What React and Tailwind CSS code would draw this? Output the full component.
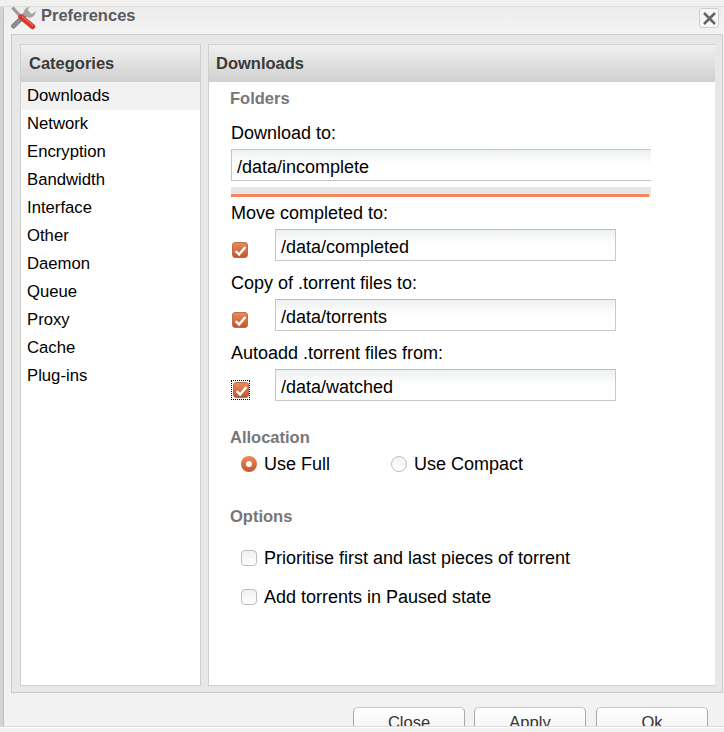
import React from 'react'

const sans = "font-['Liberation_Sans',Arial,sans-serif]"

const categories = ['Downloads', 'Network', 'Encryption', 'Bandwidth', 'Interface', 'Other', 'Daemon', 'Queue', 'Proxy', 'Cache', 'Plug-ins']

const headerBar = 'h-[38px] flex items-center bg-gradient-to-b from-[#f0f0f0] to-[#d0d0d0] border-t border-[#d2d2d2] font-bold text-[#3a3a3a] shrink-0'

// preferences tool icon: spanner crossed with a red handled screwdriver
const ToolsIcon = () => (
  <svg width="26" height="26" viewBox="0 0 26 26" className="shrink-0">
    <path d="M3.5 21 L17 8" stroke="#8c8c8c" strokeWidth="5" strokeLinecap="round" fill="none" />
    <path d="M20 2 A6 6 0 0 0 14 10 L18 12.5 A6 6 0 0 0 25.5 6 L22 9 L18.5 7 L18 4 Z" fill="#a6a6a6" />
    <path d="M2.5 2.5 L10.5 11.5" stroke="#9a9a9a" strokeWidth="3.2" fill="none" />
    <path d="M11 12 L22.5 21.5" stroke="#d8382e" strokeWidth="5.5" strokeLinecap="round" fill="none" />
    <path d="M11.5 11 L23 20.5" stroke="#f08070" strokeWidth="1" fill="none" />
  </svg>
)

const CheckedBox = () => (
  <span className="flex items-center justify-center w-4 h-4 rounded-[3px] border border-[#b8704f] bg-gradient-to-b from-[#ec8a5a] to-[#c4552c]">
    <svg width="13" height="13" viewBox="0 0 12 12">
      <path d="M1.5 6.5 L4.7 9.6 L10.5 2.8" fill="none" stroke="#fff" strokeWidth="2.2" />
    </svg>
  </span>
)

const EmptyBox = () => (
  <span className="block w-4 h-4 rounded-[4px] border border-[#bdbdbd] bg-gradient-to-b from-[#f0f0f0] to-[#ffffff]" />
)

const PathRow = ({ value, focused }) => (
  <div className="flex items-start h-8 mt-[6px]">
    <div className="w-[45px] pl-[2px] pt-[13px] h-8 shrink-0">
      {focused ? (
        <span className="block w-[19px] h-[20px] -ml-px -mt-[2px] p-px border border-dotted border-black">
          <CheckedBox />
        </span>
      ) : (
        <CheckedBox />
      )}
    </div>
    <div className="w-[341px] h-8 px-[5px] pt-[4px] flex items-center border border-[#c8c8c8] border-t-[#bcbcbc] bg-gradient-to-b from-[#eef1f1] via-white to-white text-black">
      {value}
    </div>
  </div>
)

const SectionLabel = ({ className, children }) => (
  <div className={`h-5 leading-5 font-bold text-[#777] ${className}`}>{children}</div>
)

const FieldLabel = ({ className, children }) => (
  <div className={`h-5 leading-5 pl-px text-[18px] text-black ${className}`}>{children}</div>
)

const FooterButton = ({ className, children }) => (
  <button className={`w-[112px] h-[32px] pb-[2px] rounded-t-[5px] border border-[#a8a8a8] border-t-[#c8c8c8] bg-gradient-to-b from-[#ffffff] to-[#f2f2f2] text-[#333] text-center leading-[26px] ${className}`}>
    {children}
  </button>
)

export default function App() {
  return (
    <div className={`${sans} w-[724px] h-[732px] overflow-hidden flex flex-col bg-[#f2f0ee] text-[16.5px]`}>
      <div className="h-[6px] border-b border-[#dedcda] box-content shrink-0" />

      <div className="flex h-[719px] shrink-0">
        <div className="w-[4px] bg-[#d4d4d4] border-r border-[#bfbfbf] shrink-0" />

        <div className="flex-1 flex flex-col bg-[#f2f2f2] min-w-0">
          {/* Title bar */}
          <div className="h-[27px] flex items-start pl-[6px] pr-[4px] bg-gradient-to-b from-[#ececec] to-[#f4f4f4] shrink-0 overflow-hidden">
            <div className="-mt-[2px]"><ToolsIcon /></div>
            <div className="ml-[5px] font-bold text-[#5a5a60] leading-[16px]">Preferences</div>
            <div className="ml-auto mt-px w-[20px] h-[20px] flex items-center justify-center rounded-[3px] border border-[#cfcfcf] bg-[#f7f7f7]">
              <svg width="15" height="15" viewBox="0 0 15 15">
                <path d="M2 2 L13 13 M13 2 L2 13" stroke="#666" strokeWidth="2.6" />
              </svg>
            </div>
          </div>

          {/* Main panel */}
          <div className="ml-[7px] h-[659px] pl-[8px] pt-[9px] pr-[7px] pb-[6px] flex gap-[7px] bg-[#e7e7e7] border border-[#cccccc] shrink-0">
            <div className="w-[181px] flex flex-col bg-white border-x border-b border-[#cfcfcf] shrink-0">
              <div className={`${headerBar} pl-2`}>Categories</div>
              <div className="flex flex-col text-[16.7px]">
                {categories.map((name, i) => (
                  <div key={name} className={`h-7 leading-7 pl-[6px] text-black ${i === 0 ? 'bg-[#f2f2f2]' : ''}`}>
                    {name}
                  </div>
                ))}
              </div>
            </div>

            <div className="flex-1 flex flex-col bg-white border-l border-b border-[#cfcfcf] min-w-0">
              <div className={`${headerBar} pl-[7px]`}>Downloads</div>
              <div className="pl-[21px] pt-[6px]">
                <SectionLabel>Folders</SectionLabel>
                <FieldLabel className="mt-[15px]">Download to:</FieldLabel>
                <div className="ml-px w-[420px] h-8 mt-[6px] pl-[5px] pt-[4px] flex items-center border-y border-l border-[#c4c4c4] bg-gradient-to-b from-[#eef1f1] via-white to-white text-[18px] text-black">
                  /data/incomplete
                </div>
                <div className="ml-px w-[420px] h-[10px] mt-[6px] flex flex-col justify-end bg-[#e6e6e6]">
                  <div className="w-[418px] h-[3px] bg-[#f0875f]" />
                </div>
                <FieldLabel className="mt-[6px]">Move completed to:</FieldLabel>
                <div className="text-[18px]"><PathRow value="/data/completed" /></div>
                <FieldLabel className="mt-[12px]">Copy of .torrent files to:</FieldLabel>
                <div className="text-[18px]"><PathRow value="/data/torrents" /></div>
                <FieldLabel className="mt-[12px]">Autoadd .torrent files from:</FieldLabel>
                <div className="text-[18px]"><PathRow value="/data/watched" focused /></div>

                <SectionLabel className="mt-[26px]">Allocation</SectionLabel>
                <div className="flex items-center h-5 mt-[7px] pl-[11px] text-[18px] text-black">
                  <span className="flex items-center justify-center w-4 h-4 rounded-full bg-gradient-to-b from-[#ec8a5a] to-[#c4552c]">
                    <span className="block w-[6px] h-[6px] rounded-full bg-white" />
                  </span>
                  <span className="ml-[7px] w-[127px]">Use Full</span>
                  <span className="block w-4 h-4 rounded-full border border-[#bdbdbd] bg-gradient-to-b from-[#f4f4f4] to-white" />
                  <span className="ml-[7px]">Use Compact</span>
                </div>

                <SectionLabel className="mt-[32px]">Options</SectionLabel>
                <div className="flex items-center h-5 mt-[22px] pl-[11px] text-[18px] text-black">
                  <EmptyBox />
                  <span className="ml-[7px]">Prioritise first and last pieces of torrent</span>
                </div>
                <div className="flex items-center h-5 mt-[19px] pl-[11px] text-[18px] text-black">
                  <EmptyBox />
                  <span className="ml-[7px]">Add torrents in Paused state</span>
                </div>
              </div>
            </div>
          </div>

          {/* Footer, cut off by the window edge */}
          <div className="flex-1 overflow-hidden flex items-start justify-end pt-[14px] pr-[15px]">
            <FooterButton>Close</FooterButton>
            <FooterButton className="ml-[9px]">Apply</FooterButton>
            <FooterButton className="ml-[10px]">Ok</FooterButton>
          </div>
        </div>

        <div className="w-px bg-[#f2f2f2] shrink-0" />
      </div>

      <div className="h-[7px] border-t border-[#dcdcdc] bg-[#f0f0f0] shadow-[inset_0_1px_0_#ffffff] shrink-0" />
    </div>
  )
}
